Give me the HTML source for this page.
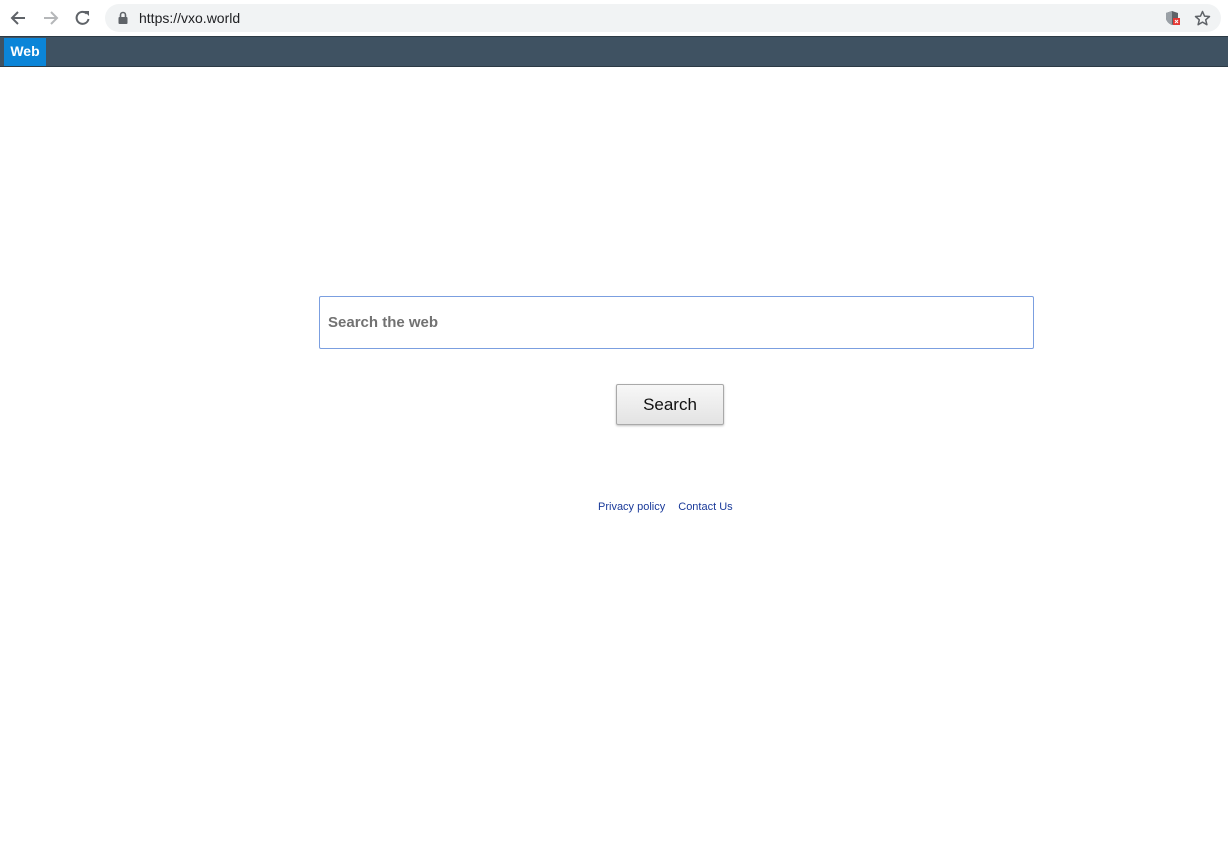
<!DOCTYPE html>
<html><head><meta charset="utf-8"><style>
*{margin:0;padding:0;box-sizing:border-box}
body{width:1228px;height:851px;background:#fff;font-family:"Liberation Sans",Arial,sans-serif;position:relative;overflow:hidden}
.chrome{position:absolute;left:0;top:0;width:1228px;height:36px;background:#fff}
.pill{position:absolute;left:105px;top:4px;width:1116px;height:28px;border-radius:14px;background:#f1f3f4}
.url{position:absolute;left:139px;top:10px;font-size:14px;color:#202124}
.nav{position:absolute;left:0;top:36px;width:1228px;height:31px;background:#3f5262;border-top:1px solid #2c3a45;border-bottom:1px solid #2c3a45}
.tab{position:absolute;left:4px;top:38px;width:42px;height:28px;background:#0b85d8;color:#fff;font-weight:bold;font-size:14px;text-align:center;line-height:27px}
.inp{position:absolute;left:319px;top:296px;width:715px;height:53px;border:1px solid #7b9fe0;border-radius:2px;background:#fff}
.inp span{position:absolute;left:8px;top:17px;font-size:15px;font-weight:bold;color:#727272}
.btn{position:absolute;left:616px;top:384px;width:108px;height:41px;border:1px solid #a9a9a9;border-radius:2px;background:linear-gradient(#f7f7f7,#e3e3e3);box-shadow:0 1px 2px rgba(0,0,0,.25);font-size:17px;color:#111;text-align:center;line-height:39px}
.links{position:absolute;left:598px;top:501px;font-size:11px;color:#1a3a9a}
.links span{margin-right:13px}
</style></head><body>
<div class="chrome">
<svg style="position:absolute;left:9px;top:9px" width="18" height="18" viewBox="0 0 18 18"><path d="M16 9H3M9 3L3 9l6 6" stroke="#5f6368" stroke-width="2" fill="none"/></svg>
<svg style="position:absolute;left:42px;top:9px" width="18" height="18" viewBox="0 0 18 18"><path d="M2 9h13M9 3l6 6-6 6" stroke="#b5b7b9" stroke-width="2" fill="none"/></svg>
<svg style="position:absolute;left:74px;top:9px" width="18" height="18" viewBox="0 0 18 18"><path d="M14.5 10A6 6 0 1 1 12.8 4.6" stroke="#5f6368" stroke-width="2" fill="none"/><path d="M10 2h5v5z" fill="#5f6368"/></svg>
<div class="pill"></div>
<svg style="position:absolute;left:118px;top:11px" width="10" height="13" viewBox="0 0 10 13"><path d="M2.5 6V4a2.5 2.5 0 0 1 5 0v2" stroke="#5f6368" stroke-width="1.6" fill="none"/><rect x="0.5" y="6" width="9" height="7" rx="1" fill="#5f6368"/></svg>
<div class="url">https://vxo.world</div>
<svg style="position:absolute;left:1165px;top:10px" width="16" height="16" viewBox="0 0 16 16"><path d="M7 1l6 2v5c0 3-3 6-6 7C4 14 1 11 1 8V3z" fill="#5f6368"/><path d="M7 1v14C4 14 1 11 1 8V3z" fill="#9aa0a6"/><rect x="8" y="8" width="7" height="7" fill="#e53935"/><path d="M10 10l3 3M13 10l-3 3" stroke="#fff" stroke-width="1"/></svg>
<svg style="position:absolute;left:1194px;top:10px" width="17" height="16" viewBox="0 0 17 16"><path d="M8.5 1.5l2 4.6 5 .4-3.8 3.3 1.2 4.9-4.4-2.6-4.4 2.6 1.2-4.9L1.5 6.5l5-.4z" stroke="#5f6368" stroke-width="1.5" fill="none" stroke-linejoin="round"/></svg>
</div>
<div class="nav"></div>
<div class="tab">Web</div>
<div class="inp"><span>Search the web</span></div>
<div class="btn">Search</div>
<div class="links"><span>Privacy policy</span>Contact Us</div>
</body></html>
